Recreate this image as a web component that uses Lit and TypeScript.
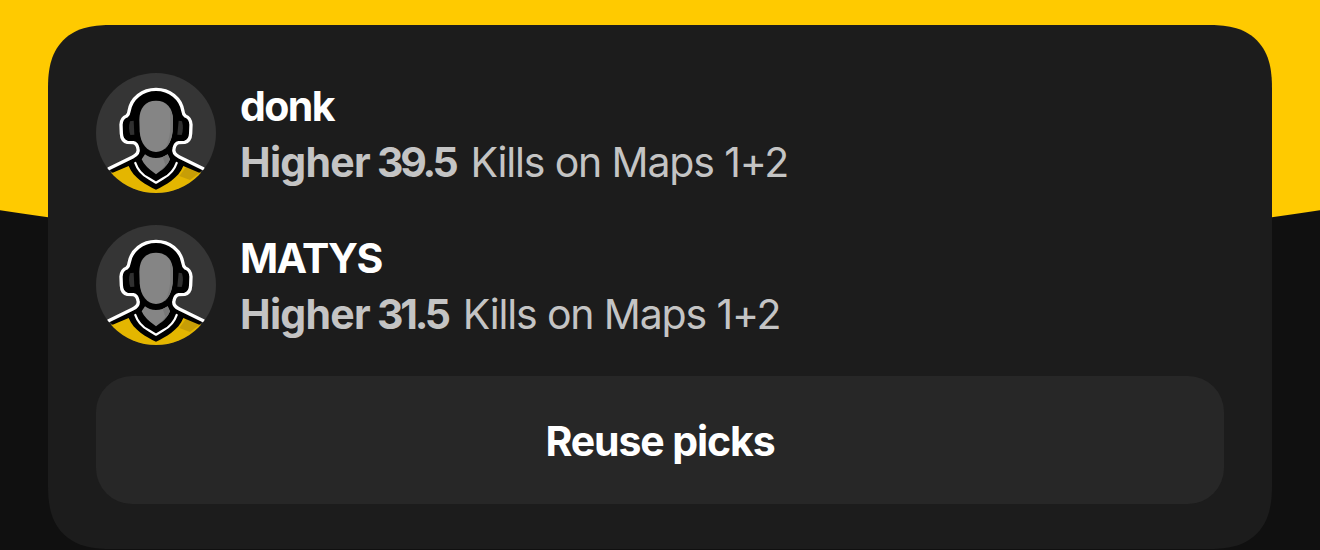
import { LitElement, html, css } from 'lit';
import { customElement, property } from 'lit/decorators.js';

interface Pick {
  player: string;
  side: string;
  line: string;
  stat: string;
}

const picks: Pick[] = [
  { player: 'donk', side: 'Higher', line: '39.5', stat: 'Kills on Maps 1+2' },
  { player: 'MATYS', side: 'Higher', line: '31.5', stat: 'Kills on Maps 1+2' },
];

@customElement('player-avatar')
export class PlayerAvatar extends LitElement {
  static styles = css`
    :host {
      display: block;
      flex: none;
      width: 120px;
      height: 120px;
      border-radius: 50%;
      overflow: hidden;
      background: #353535;
    }

    svg {
      display: block;
      width: 100%;
      height: 100%;
    }
  `;

  render() {
    return html`
      <svg viewBox="18 21 360 360" aria-hidden="true">
        <!-- jersey -->
        <path
          fill="#e4b600"
          d="M60 322 L120 296 L198 350 L276 296 L336 322 L336 390 L60 390 Z"
        />
        <path fill="#c79e06" d="M268 330 L290 300 L332 318 L300 342 Z" />
        <!-- silhouette -->
        <path
          d="M56 308 L128 273 Q148 263 144 248 Q141 232 130 230 L112 229 Q95 225 94 202 L93 176 Q94 156 110 150 Q116 146 117 136 C123 96 158 70 198 70 C238 70 273 96 279 136 Q280 146 286 150 Q302 156 303 176 L302 202 Q301 225 284 229 L266 230 Q255 232 252 248 Q248 263 268 273 L340 308 L328 320 L280 300 C266 336 226 358 198 371 C170 358 130 336 116 300 L68 320 Z"
        />
        <path
          fill="none"
          stroke="#fff"
          stroke-width="10"
          stroke-linecap="round"
          stroke-linejoin="round"
          d="M56 308 L128 273 Q148 263 144 248 Q141 232 130 230 L112 229 Q95 225 94 202 L93 176 Q94 156 110 150 Q116 146 117 136 C123 96 158 70 198 70 C238 70 273 96 279 136 Q280 146 286 150 Q302 156 303 176 L302 202 Q301 225 284 229 L266 230 Q255 232 252 248 Q248 263 268 273 L340 308"
        />
        <!-- neck -->
        <path
          fill="#858585"
          d="M165 265 Q178 276 198 276 Q218 276 233 265 L240 280 Q232 302 198 325 Q164 302 155 280 Z"
        />
        <path
          fill="#787878"
          d="M218 273 L233 265 L240 280 Q234 298 212 315 L226 296 Z"
        />
        <!-- face -->
        <path
          fill="#858585"
          d="M198 104 C230 104 249 126 249 162 L248 196 C245 234 224 258 198 258 C172 258 151 234 149 196 L148 162 C148 126 166 104 198 104 Z"
        />
        <path
          fill="#7b7b7b"
          d="M240 132 Q249 144 249 162 L248 196 Q244 232 224 250 Q240 222 241 184 Z"
        />
        <!-- ear cups -->
        <path fill="#303030" d="M120 166 L131 164 L133 206 L121 207 Q114 187 120 166 Z" />
        <path fill="#303030" d="M276 166 L266 164 L262 206 L275 207 Q282 187 276 166 Z" />
        <!-- collar -->
        <path
          fill="none"
          stroke="#fff"
          stroke-width="7"
          stroke-linecap="round"
          stroke-linejoin="round"
          d="M136 291 Q146 321 176 337 L198 350 L220 337 Q250 321 260 291"
        />
      </svg>
    `;
  }
}

@customElement('pick-row')
export class PickRow extends LitElement {
  @property({ attribute: false }) pick!: Pick;

  static styles = css`
    :host {
      display: flex;
      align-items: center;
      gap: 24px;
      height: 120px;
    }

    .text {
      display: flex;
      flex-direction: column;
      padding-top: 2px;
      white-space: nowrap;
      font-size: 41px;
      line-height: 56px;
    }

    .name {
      color: #fff;
      font-weight: 650;
      letter-spacing: -1.6px;
    }

    .detail {
      display: flex;
      color: #c4c4c4;
      letter-spacing: -1.15px;
    }

    .side {
      margin-right: 7px;
      font-weight: 650;
      letter-spacing: -0.7px;
    }

    .line {
      margin-right: 15px;
      font-weight: 650;
      letter-spacing: -3.3px;
    }
  `;

  render() {
    const { player, side, line, stat } = this.pick;
    return html`
      <player-avatar></player-avatar>
      <div class="text">
        <span class="name">${player}</span>
        <span class="detail">
          <span class="side">${side}</span>
          <span class="line">${line}</span>
          <span>${stat}</span>
        </span>
      </div>
    `;
  }
}

@customElement('app-root')
export class AppRoot extends LitElement {
  static styles = css`
    :host {
      display: block;
      box-sizing: border-box;
      height: 550px;
      padding: 25px 48px 0;
      overflow: hidden;
      font-family: Inter, 'Liberation Sans', sans-serif;
      background:
        radial-gradient(
          circle at 50% -4140px,
          #ffca00 4399.5px,
          transparent 4400.5px
        ),
        #101010;
    }

    .card {
      display: flex;
      flex-direction: column;
      box-sizing: border-box;
      height: 524px;
      padding: 48px 48px 0;
      border-radius: 48px;
      background: #1c1c1c;
    }

    .picks {
      display: flex;
      flex-direction: column;
      gap: 32px;
    }

    button {
      flex: none;
      height: 128px;
      margin-top: 31px;
      padding: 2px 0 0;
      border: 0;
      border-radius: 36px;
      background: #272727;
      color: #fff;
      font: 650 41px/56px Inter, 'Liberation Sans', sans-serif;
      letter-spacing: -1.1px;
    }

    @supports (corner-shape: superellipse(1.35)) {
      .card {
        border-radius: 64px;
        corner-shape: superellipse(1.35);
      }
    }
  `;

  render() {
    return html`
      <section class="card">
        <div class="picks">
          ${picks.map((pick) => html`<pick-row .pick=${pick}></pick-row>`)}
        </div>
        <button type="button">Reuse picks</button>
      </section>
    `;
  }
}
